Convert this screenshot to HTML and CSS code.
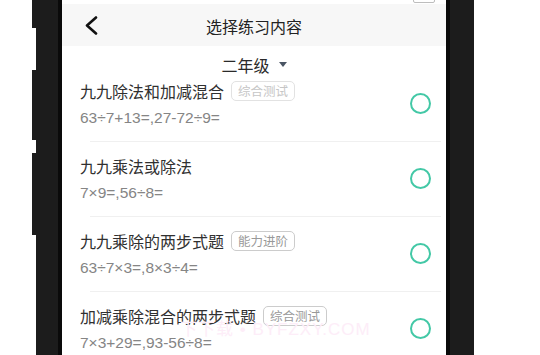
FILE: index.html
```html
<!DOCTYPE html>
<html lang="zh-CN">
<head>
<meta charset="utf-8">
<title>选择练习内容</title>
<link rel="stylesheet" href="styles.css">
</head>
<body>
<div class="stage">
  <div class="side-buttons">
    <div class="seg s1"></div>
    <div class="seg gap g1"></div>
    <div class="seg s2"></div>
    <div class="seg gap g2"></div>
    <div class="seg s3"></div>
  </div>
  <div class="phone">
    <div class="screen">
      <div class="status">
        <div class="status-inner">
          <span class="carrier">Carrier ✦</span>
          <span class="time">9:41 AM</span>
          <span class="batt"></span>
        </div>
      </div>
      <div class="nav">
        <div class="nav-left">
          <svg class="back" width="14" height="19" viewBox="0 0 14 19"><path d="M12 1.5 L3 9.5 L12 17.5" fill="none" stroke="#111" stroke-width="2.6" stroke-linecap="round" stroke-linejoin="round"/></svg>
        </div>
        <div class="nav-title">选择练习内容</div>
        <div class="nav-right"></div>
      </div>
      <div class="grade"><span>二年级</span><span class="caret"></span></div>
      <div class="list">
        <div class="item first">
          <div class="info">
            <div class="title-row"><span class="title">九九除法和加减混合</span><span class="tag faded">综合测试</span></div>
            <div class="expr">63÷7+13=,27-72÷9=</div>
          </div>
          <div class="radio"></div>
        </div>
        <div class="sep"></div>
        <div class="item">
          <div class="info">
            <div class="title-row"><span class="title">九九乘法或除法</span></div>
            <div class="expr">7×9=,56÷8=</div>
          </div>
          <div class="radio"></div>
        </div>
        <div class="sep"></div>
        <div class="item">
          <div class="info">
            <div class="title-row"><span class="title">九九乘除的两步式题</span><span class="tag">能力进阶</span></div>
            <div class="expr">63÷7×3=,8×3÷4=</div>
          </div>
          <div class="radio"></div>
        </div>
        <div class="sep"></div>
        <div class="item">
          <div class="info">
            <div class="title-row"><span class="title">加减乘除混合的两步式题</span><span class="tag">综合测试</span></div>
            <div class="expr">7×3+29=,93-56÷8=</div>
          </div>
          <div class="radio"></div>
        </div>
      </div>
      <div class="watermark">下下载 • BYFZXY.COM</div>
    </div>
  </div>
</div>
</body>
</html>
```
FILE: styles.css
```css
html, body {
  margin: 0;
  padding: 0;
  background: #ffffff;
}
body {
  font-family: "Noto Sans CJK SC", "Liberation Sans", sans-serif;
  width: 540px;
  height: 355px;
  overflow: hidden;
}
.stage {
  display: flex;
  height: 355px;
  padding-left: 32px;
  overflow: hidden;
}
.side-buttons {
  width: 4px;
  display: flex;
  flex-direction: column;
}
.seg { background: #1c1c1c; }
.seg.gap { background: transparent; }
.s1 { height: 28px; }
.g1 { height: 42px; }
.s2 { height: 70px; }
.g2 { height: 13px; }
.s3 { height: 82px; }
.phone {
  width: 438px;
  height: 355px;
  background: #1c1c1c;
  padding-left: 22px;
  padding-right: 24px;
  box-sizing: border-box;
  display: flex;
}
.screen {
  position: relative;
  width: 384px;
  height: 355px;
  background: #ffffff;
  border-left: 4px solid #0a0a0a;
  border-right: 4px solid #0a0a0a;
  overflow: hidden;
  flex: none;
}
.status {
  height: 4px;
  overflow: hidden;
  background: #ffffff;
}
.status-inner {
  margin-top: -11px;
  height: 14px;
  display: flex;
  align-items: flex-end;
  font-family: "Liberation Sans", sans-serif;
  font-size: 12px;
  line-height: 14px;
  color: #9a9a9a;
  padding: 0 11px 0 5px;
}
.carrier { width: 170px; }
.time { flex: 1; }
.batt {
  width: 22px;
  height: 10px;
  border: 1px solid #bdbdbd;
  border-radius: 2px;
  box-sizing: border-box;
}
.nav {
  height: 42px;
  background: #f7f7f7;
  display: grid;
  grid-template-columns: 1fr auto 1fr;
  align-items: center;
  padding-top: 1px;
  box-sizing: border-box;
}
.nav-left {
  padding-left: 22px;
  display: flex;
  align-items: center;
}
.back { display: block; }
.nav-title {
  font-size: 16px;
  line-height: 22px;
  color: #222222;
}
.grade {
  height: 34px;
  box-sizing: border-box;
  padding-top: 3px;
  display: flex;
  justify-content: center;
  align-items: center;
  font-size: 16px;
  line-height: 22px;
  color: #2a2a2a;
}
.caret {
  width: 0;
  height: 0;
  margin-left: 9px;
  border-left: 4px solid transparent;
  border-right: 4px solid transparent;
  border-top: 5px solid #4a5563;
}
.item {
  display: flex;
  align-items: center;
  padding: 13px 15px 14px 18px;
}
.item.first { padding-top: 0; }
.info { flex: 1; min-width: 0; }
.title-row {
  display: flex;
  align-items: center;
  gap: 7px;
  height: 22px;
}
.title {
  font-size: 16px;
  line-height: 22px;
  color: #303030;
  white-space: nowrap;
}
.tag {
  font-size: 12.5px;
  line-height: 18px;
  height: 20px;
  box-sizing: border-box;
  padding: 0 6px;
  border: 1px solid #cccccc;
  border-radius: 5px;
  color: #999999;
  white-space: nowrap;
}
.tag.faded {
  color: #c6c6c6;
  border-color: #e2e2e2;
}
.expr {
  margin-top: 7px;
  font-family: "Liberation Sans", "Noto Sans CJK SC", sans-serif;
  font-size: 15.5px;
  line-height: 18px;
  color: #858585;
  white-space: nowrap;
}
.radio {
  width: 21px;
  height: 21px;
  box-sizing: border-box;
  border: 2px solid #43c8a6;
  border-radius: 50%;
  flex: none;
}
.sep {
  height: 1px;
  background: #f0f0f0;
  margin: 0 5px 0 28px;
}
.watermark {
  position: absolute;
  left: 118px;
  top: 318px;
  font-family: "Liberation Sans", "Noto Sans CJK SC", sans-serif;
  font-size: 17px;
  line-height: 24px;
  letter-spacing: 1px;
  color: #fdedf8;
  white-space: nowrap;
}
```
